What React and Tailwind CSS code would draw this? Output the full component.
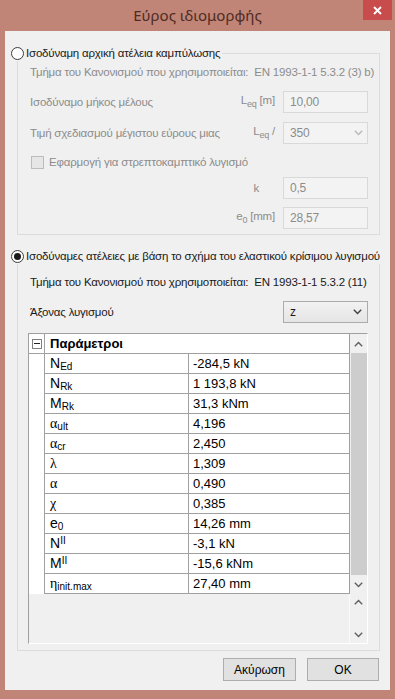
import React from "react";

const UI = "font-['Liberation_Sans',sans-serif]";

const Chevron = ({ color = "#404040" }) => (
  <svg width="9" height="6" viewBox="0 0 9 6" className="shrink-0">
    <path d="M0.8 0.8 L4.5 4.6 L8.2 0.8" fill="none" stroke={color} strokeWidth="1.4" />
  </svg>
);

const ChevronUp = () => (
  <svg width="9" height="6" viewBox="0 0 9 6">
    <path d="M0.8 5.2 L4.5 1.4 L8.2 5.2" fill="none" stroke="#606060" strokeWidth="1.4" />
  </svg>
);

const Radio = ({ checked }) => (
  <span className="w-[13px] h-[13px] rounded-full border border-[#3c3c3c] bg-white flex items-center justify-center shrink-0">
    {checked && <span className="w-[7px] h-[7px] rounded-full bg-[#1a1a1a]" />}
  </span>
);

// disabled text box
const Field = ({ value, select }) => (
  <div className="w-[85px] h-[22px] ml-[8px] border border-[#d9d9d9] bg-[#f3f3f3] flex items-center pl-[6px] pr-[4px] text-[#8c8c8c] text-[12px]">
    <span className="flex-1">{value}</span>
    {select && <Chevron color="#b8b8b8" />}
  </div>
);

const Leq = () => (
  <>
    L<span className="text-[9px] align-sub">eq</span>
  </>
);

const rows = [
  { n: "N", sub: "Ed", v: "-284,5 kN" },
  { n: "N", sub: "Rk", v: "1 193,8 kN" },
  { n: "M", sub: "Rk", v: "31,3 kNm" },
  { n: "α", sub: "ult", v: "4,196", g: true },
  { n: "α", sub: "cr", v: "2,450", g: true },
  { n: "λ", v: "1,309", g: true },
  { n: "α", v: "0,490", g: true },
  { n: "χ", v: "0,385", g: true },
  { n: "e", sub: "0", v: "14,26 mm" },
  { n: "N", sup: "II", v: "-3,1 kN" },
  { n: "M", sup: "II", v: "-15,6 kNm" },
  { n: "η", sub: "init.max", v: "27,40 mm", g: true },
];

const Symbol = ({ n, sub, sup, g }) => (
  <span className="text-[14px] text-black tracking-normal">
    <span className={g ? "font-['Liberation_Serif',serif] text-[14px]" : ""}>{n}</span>
    {sub && <span className="text-[10px] relative top-[2px]">{sub}</span>}
    {sup && <span className="text-[10px] relative -top-[4px]">{sup}</span>}
  </span>
);

export default function App() {
  return (
    <div className={`w-[395px] h-[699px] bg-[#c08576] flex flex-col ${UI} text-[11.5px] tracking-[-0.2px] leading-[16px]`}>
      {/* title bar */}
      <div className="h-[31px] relative flex items-center justify-center shrink-0">
        <span className="font-['Noto_Sans',sans-serif] tracking-normal text-[15px] text-[#4e2b24] -mt-[1px]">Εύρος ιδιομορφής</span>
        <div className="absolute top-0 right-[3px] w-[29px] h-[20px] bg-[#c94c4c] flex items-center justify-center">
          <svg width="9" height="9" viewBox="0 0 9 9">
            <path d="M1 1 L8 8 M8 1 L1 8" stroke="white" strokeWidth="1.8" />
          </svg>
        </div>
      </div>

      {/* client area */}
      <div className="mx-[5px] h-[659px] bg-[#f0f0f0] flex flex-col pt-[15px]">
        {/* group 1 */}
        <div className="relative z-10 h-[14px] flex items-center pl-[6px]">
          <div className="flex items-center gap-[2px] bg-[#f0f0f0] pr-[2px]">
            <Radio />
            <span className="text-[#1a1a1a]">Ισοδύναμη αρχική ατέλεια καμπύλωσης</span>
          </div>
        </div>
        <div className="-mt-[7px] ml-[12px] mr-[10px] h-[182px] border border-[#dcdcdc] flex flex-col pl-[12px] pr-[11px] text-[#8c8c8c]">
          <div className="mt-[10px] h-[16px] whitespace-nowrap">
            Τμήμα του Κανονισμού που χρησιμοποιείται:&nbsp; EN 1993-1-1 5.3.2 (3) b)
          </div>
          <div className="mt-[11px] flex items-center">
            <span className="flex-1">Ισοδύναμο μήκος μέλους</span>
            <span><Leq /> [m]</span>
            <Field value="10,00" />
          </div>
          <div className="mt-[9px] flex items-center">
            <span className="flex-1 whitespace-nowrap">Τιμή σχεδιασμού μέγιστου εύρους μιας</span>
            <span><Leq /> /</span>
            <Field value="350" select />
          </div>
          <div className="mt-[10px] h-[16px] flex items-center gap-[5px] pl-[1px]">
            <span className="w-[13px] h-[13px] border border-[#bcbcbc] bg-[#e6e6e6]" />
            <span>Εφαρμογή για στρεπτοκαμπτικό λυγισμό</span>
          </div>
          <div className="mt-[7px] flex items-center justify-end">
            <span className="mr-[16px]">k</span>
            <Field value="0,5" />
          </div>
          <div className="mt-[8px] flex items-center justify-end">
            <span>
              e<span className="text-[9px] align-sub">0</span> [mm]
            </span>
            <Field value="28,57" />
          </div>
        </div>

        {/* group 2 */}
        <div className="relative z-10 mt-[14px] h-[14px] flex items-center pl-[6px]">
          <div className="flex items-center gap-[2px] bg-[#f0f0f0] pr-[2px]">
            <Radio checked />
            <span className="text-[#1a1a1a] whitespace-nowrap">
              Ισοδύναμες ατέλειες με βάση το σχήμα του ελαστικού κρίσιμου λυγισμού
            </span>
          </div>
        </div>
        <div className="-mt-[7px] ml-[12px] mr-[10px] border border-[#dcdcdc] flex flex-col text-[#1a1a1a] pb-[6px]">
          <div className="mt-[17px] pl-[12px] h-[16px] whitespace-nowrap">
            Τμήμα του Κανονισμού που χρησιμοποιείται:&nbsp; EN 1993-1-1 5.3.2 (11)
          </div>
          <div className="mt-[11px] pl-[12px] pr-[11px] flex items-center">
            <span className="flex-1">Άξονας λυγισμού</span>
            <div className="w-[85px] h-[22px] border border-[#acacac] bg-gradient-to-b from-[#f2f2f2] to-[#e5e5e5] flex items-center pl-[6px] pr-[5px] text-[12px]">
              <span className="flex-1">z</span>
              <Chevron />
            </div>
          </div>

          {/* property grid */}
          <div className="mt-[10px] ml-[10px] mr-[11px] h-[311px] border-t border-l border-[#a0a0a0] border-r border-b border-r-white border-b-white flex flex-col tracking-normal">
            <div className="flex">
              <div className="w-[323px] bg-white border-r border-[#a0a0a0]">
                <div className="h-[20px] flex border-b border-[#a0a0a0]">
                  <div className="w-[15px] flex items-center justify-center">
                    <span className="w-[10px] h-[10px] border border-[#808080] bg-white flex items-center justify-center">
                      <span className="w-[6px] h-[1px] bg-[#202020]" />
                    </span>
                  </div>
                  <div className="flex-1 border-l border-[#a0a0a0] pl-[5px] flex items-center text-[13px] font-bold text-black">
                    Παράμετροι
                  </div>
                </div>
                {rows.map((r, i) => (
                  <div key={i} className="h-[20px] flex">
                    <div className="w-[15px]" />
                    <div className="w-[144px] border-l border-b border-[#a0a0a0] pl-[5px] flex items-center">
                      <Symbol {...r} />
                    </div>
                    <div className="flex-1 border-l border-b border-[#a0a0a0] pl-[4px] flex items-center text-[13px] text-black">
                      {r.v}
                    </div>
                  </div>
                ))}
              </div>
              <div className="w-[17px] flex flex-col bg-[#f0f0f0]">
                <div className="h-[19px] flex items-center justify-center">
                  <ChevronUp />
                </div>
                <div className="flex-1 ml-[1px] bg-[#cdcdcd]" />
                <div className="h-[19px] flex items-center justify-center">
                  <Chevron color="#606060" />
                </div>
              </div>
            </div>
            <div className="flex-1 flex">
              <div className="w-[323px] border-r border-[#fafafa]" />
              <div className="w-[17px] flex flex-col justify-between py-[5px] items-center">
                <ChevronUp />
                <Chevron color="#606060" />
              </div>
            </div>
          </div>
        </div>

        {/* buttons */}
        <div className="mt-[7px] mr-[11px] flex justify-end gap-[11px]">
          <button className="w-[73px] h-[23px] border border-[#adadad] bg-[#e1e1e1] text-[12px] tracking-normal text-black">
            Ακύρωση
          </button>
          <button className="w-[72px] h-[23px] border border-[#adadad] bg-[#e1e1e1] text-[12px] tracking-normal text-black">
            OK
          </button>
        </div>
      </div>
    </div>
  );
}
